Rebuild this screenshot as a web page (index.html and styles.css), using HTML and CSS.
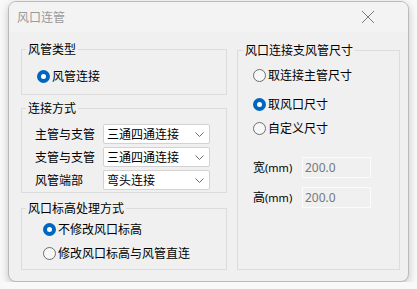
FILE: index.html
```html
<!DOCTYPE html>
<html>
<head>
    <meta charset="utf-8">
    <title>风口连管</title>
    <link rel="stylesheet" href="styles.css">
</head>
<body>
    <div class="window">
        <div class="titlebar">
            <span class="title">风口连管</span>
            <svg class="close" width="14" height="14" viewBox="0 0 14 14">
                <path d="M1 1 L13 13 M13 1 L1 13" stroke="#7a7a7a" stroke-width="1" fill="none"/>
            </svg>
        </div>
        <div class="content">
            <div class="leftcol">
                <fieldset class="group g1">
                    <legend>风管类型</legend>
                    <div class="inner">
                        <div class="radio"><span class="dot on"></span>风管连接</div>
                    </div>
                </fieldset>
                <fieldset class="group g2">
                    <legend>连接方式</legend>
                    <div class="inner">
                        <div class="row">
                            <span class="label">主管与支管</span>
                            <div class="combo">三通四通连接<svg width="9" height="5" viewBox="0 0 9 5"><path d="M0.5 0.5 L4.5 4.5 L8.5 0.5" stroke="#6a6a6a" fill="none"/></svg></div>
                        </div>
                        <div class="row">
                            <span class="label">支管与支管</span>
                            <div class="combo">三通四通连接<svg width="9" height="5" viewBox="0 0 9 5"><path d="M0.5 0.5 L4.5 4.5 L8.5 0.5" stroke="#6a6a6a" fill="none"/></svg></div>
                        </div>
                        <div class="row">
                            <span class="label">风管端部</span>
                            <div class="combo">弯头连接<svg width="9" height="5" viewBox="0 0 9 5"><path d="M0.5 0.5 L4.5 4.5 L8.5 0.5" stroke="#6a6a6a" fill="none"/></svg></div>
                        </div>
                    </div>
                </fieldset>
                <fieldset class="group g3">
                    <legend>风口标高处理方式</legend>
                    <div class="inner">
                        <div class="radio"><span class="dot on"></span>不修改风口标高</div>
                        <div class="radio"><span class="dot"></span>修改风口标高与风管直连</div>
                    </div>
                </fieldset>
            </div>
            <fieldset class="group g4">
                <legend>风口连接支风管尺寸</legend>
                <div class="inner">
                    <div class="radio"><span class="dot"></span>取连接主管尺寸</div>
                    <div class="radio r2"><span class="dot on"></span>取风口尺寸</div>
                    <div class="radio r3"><span class="dot"></span>自定义尺寸</div>
                    <div class="field f1">
                        <span class="flabel">宽<small>(mm)</small></span>
                        <input class="num" type="text" value="200.0" disabled>
                    </div>
                    <div class="field f2">
                        <span class="flabel">高<small>(mm)</small></span>
                        <input class="num" type="text" value="200.0" disabled>
                    </div>
                </div>
            </fieldset>
        </div>
    </div>
</body>
</html>
```

FILE: styles.css
```css
body {
    margin: 0;
    padding: 1px 8px 0;
    background-color: #f9f9f9;
    font-family: "Noto Sans CJK SC", "Noto Sans", sans-serif;
    font-size: 12px;
    color: #000;
}

.window {
    width: 401px;
    height: 281px;
    box-sizing: border-box;
    border: 1px solid #bababa;
    border-radius: 8px;
    background-color: #f0f0f0;
    box-shadow: 0 3px 8px rgba(0, 0, 0, .22);
    overflow: hidden;
}

.titlebar {
    height: 30px;
    display: flex;
    align-items: center;
    justify-content: space-between;
    padding: 0 33px 0 8px;
    background-color: #f3f3f3;
}

.title {
    color: #9a9a9a;
    font-size: 12px;
    line-height: 16px;
}

.close {
    display: block;
}

.content {
    display: flex;
    gap: 10px;
    padding: 0 8px 0 12px;
}

.leftcol {
    width: 206px;
    display: flex;
    flex-direction: column;
}

fieldset.group {
    margin: 0;
    padding: 0;
    min-width: 0;
    border: 1px solid #dcdcdc;
    box-sizing: border-box;
}

fieldset.group legend {
    margin-left: 4px;
    padding: 0 2px;
    line-height: 16px;
    font-size: 12px;
}

.g4 legend {
    margin-left: 5px !important;
}

.g1 {
    margin-top: 9px !important;
}

.g1 .inner {
    padding: 11px 0 10px 15px;
}

.g2 {
    margin-top: 5px !important;
}

.g2 .inner {
    padding: 8px 0 2px 13px;
}

.g3 {
    margin-top: 7px !important;
}

.g3 .inner {
    padding: 5px 0 8px 21px;
}

.g4 {
    width: 163px;
    margin-top: 10px !important;
}

.g4 .inner {
    padding: 9px 0 61px 15px;
}

.radio {
    display: flex;
    align-items: center;
    gap: 2px;
    height: 16px;
    line-height: 16px;
}

.g3 .radio + .radio {
    margin-top: 8px;
}

.g4 .r2 {
    margin-top: 13px;
}

.g4 .r3 {
    margin-top: 8px;
}

.dot {
    width: 13px;
    height: 13px;
    box-sizing: border-box;
    border-radius: 50%;
    border: 1px solid #6e6e6e;
    background-color: #f7f7f7;
}

.dot.on {
    border: 4px solid #0067c0;
    background-color: #fff;
}

.row {
    display: flex;
    align-items: center;
    height: 20px;
}

.row + .row {
    margin-top: 3px;
}

.label {
    width: 68px;
    line-height: 16px;
}

.combo {
    width: 107px;
    height: 20px;
    box-sizing: border-box;
    display: flex;
    align-items: center;
    justify-content: space-between;
    padding: 0 5px 0 3px;
    background-color: #fff;
    border: 1px solid #d2d2d2;
    border-radius: 2px;
    line-height: 16px;
}

.field {
    display: flex;
    align-items: center;
    height: 21px;
}

.f1 {
    margin-top: 21px;
}

.f2 {
    margin-top: 9px;
}

.flabel {
    width: 49px;
    line-height: 16px;
}

.flabel small {
    font-family: "Noto Sans", "Liberation Sans", sans-serif;
    font-size: 11px;
}

.num {
    width: 69px;
    height: 21px;
    box-sizing: border-box;
    margin: 0;
    padding: 0 0 0 2px;
    border: 1px solid #fbfbfb;
    background-color: #f0f0f0;
    color: #787878;
    font-family: "Noto Sans", "Liberation Sans", sans-serif;
    font-size: 12px;
    outline: none;
}
```
